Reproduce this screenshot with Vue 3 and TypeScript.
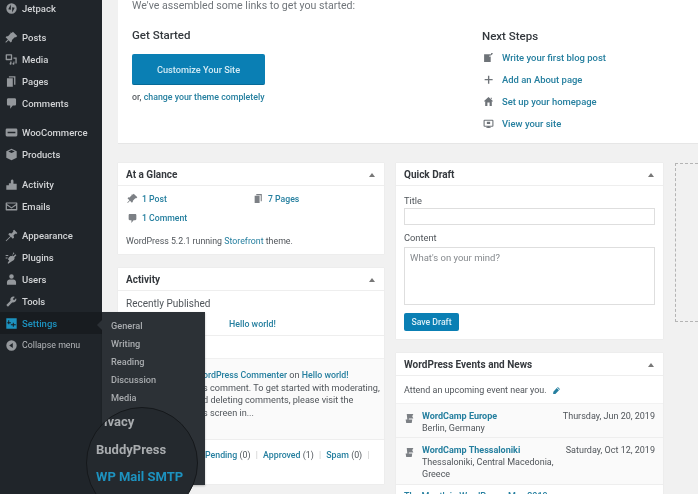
<script setup lang="ts">
const P: Record<string, string> = {
  jetpack: 'M10 2a8 8 0 1 0 0 16 8 8 0 0 0 0-16zM9 4v8L5 11zM11 8l4 1-4 7z',
  pin: 'M10.4 3l1.8-1.8 6.6 6.6-1.8 1.8c-.8-.3-1.8-.1-2.4.5l-3.5 3.5c-.6.6-.7 1.5-.4 2.3l-1.8 1.8-3.5-3.5-3.9 3.9-1-1 3.9-3.9-3.5-3.5 1.8-1.8c.8.3 1.7.2 2.3-.4l3.5-3.5c.6-.6.2-1.2-.1-2z',
  media: 'M2 2h8a1 1 0 0 1 1 1v7a1 1 0 0 1-1 1H2a1 1 0 0 1-1-1V3a1 1 0 0 1 1-1zm1 2v5h6V4zm10 3h5v9h-2v-7h-3zM8 13h2v3.500a1.500 1.500 0 1 1-2-1.400zM13 13h1.500v3.500a1.500 1.500 0 1 1-1.500-1.400z',
  pages: 'M6 2h10v13h-2V4H6zM3 5h9v13H3z',
  comment: 'M5 2h10c1.100 0 2 .9 2 2v7c0 1.100-.9 2-2 2h-3l-4 5v-5H5c-1.100 0-2-.9-2-2V4c0-1.100.9-2 2-2z',
  woo: 'M3 4h14a2 2 0 0 1 2 2v8a2 2 0 0 1-2 2H3a2 2 0 0 1-2-2V6a2 2 0 0 1 2-2zm1 5v2h12V9z',
  box: 'M10 1l8 4v10l-8 4-8-4V5zm0 2L5 5.300l5 2.400 5-2.400z',
  activity: 'M2 18V11h4V8h3V4l2-2 2 2v5h5v9z',
  mail: 'M2 4h16a1 1 0 0 1 1 1v10a1 1 0 0 1-1 1H2a1 1 0 0 1-1-1V5a1 1 0 0 1 1-1zm1 2l7 5 7-5v-.5H3zm0 2.300V14h14V8.300l-7 4.700z',
  brush: 'M14 1l5 5-2 2-1-1-3 3 1 3-2 2-3-3-7 7-1-1 7-7-3-3 2-2 3 1 3-3-1-1z',
  plugin: 'M13 2l1.500 1.500-3 3L13 8l3-3 1.500 1.500-3 3c.8 2-.2 4-2 5l-2.500 1.500L6 19l-1 .5-1-1 2.500-4L4.500 12.500 6 10c1-1.800 3-2.800 5-2zM1 10h3v1.500H1zM1 6h4v1.500H1z',
  users: 'M10 2a3.500 3.500 0 1 1 0 7 3.500 3.500 0 0 1 0-7zM3 18v-4c0-2 2-4 4-4h6c2 0 4 2 4 4v4z',
  wrench: 'M17 5l-3 3-2-2 3-3c-2-1-4-.5-5.500 1S8 7.500 8.500 9L2 15.500 4.500 18 11 11.500c1.500.5 3.500 0 5-1.500s2-3 1-5z',
  settings: 'M2 2h16v16H2zm3 3v3H3.500v1.500H5V11h1.500V9.500H9V8H6.500V5zm7 4v2H9v1.500h3V15h1.500v-2.500H16.500V11h-3V9z',
  collapse: 'M10 2a8 8 0 1 0 0 16 8 8 0 0 0 0-16zm2 4v8L6.500 10z',
  edit: 'M2 4h12v3h-3v1h3v10H2zM15 2l2 0 1 1-3 3-1-1z',
  plus: 'M9 3h2.500v6H17.500v2.500h-6V17.500H9v-6H3V9h6z',
  home: 'M10 2l8 7-1 1.500-1-.8V18h-4v-6H8v6H4V9.700l-1 .8L2 9zM14 3h2v3l-2-1.500z',
  screen: 'M3 3h14a2 2 0 0 1 2 2v9a2 2 0 0 1-2 2h-5v1h2v1H6v-1h2v-1H3a2 2 0 0 1-2-2V5a2 2 0 0 1 2-2zm0 2v9h14V5zm4 2h6v4H7z',
  camp: 'M4 2h13l-2 4 2 4H9l-.5 2H15l-1 6H4l-1-6h3L5 2z',
  pencil: 'M13 2l5 5-1.500 1.500-5-5zM10.500 4.500l5 5-8 8-5 .5.500-5.500z',
}
const menu = [
  [{ label: 'Jetpack', icon: 'jetpack' }],
  [
    { label: 'Posts', icon: 'pin' },
    { label: 'Media', icon: 'media' },
    { label: 'Pages', icon: 'pages' },
    { label: 'Comments', icon: 'comment' },
  ],
  [
    { label: 'WooCommerce', icon: 'woo' },
    { label: 'Products', icon: 'box' },
  ],
  [
    { label: 'Activity', icon: 'activity' },
    { label: 'Emails', icon: 'mail' },
  ],
  [
    { label: 'Appearance', icon: 'brush' },
    { label: 'Plugins', icon: 'plugin' },
    { label: 'Users', icon: 'users' },
    { label: 'Tools', icon: 'wrench' },
    { label: 'Settings', icon: 'settings', current: true },
    { label: 'Collapse menu', icon: 'collapse', dim: true },
  ],
]
const submenu = ['General', 'Writing', 'Reading', 'Discussion', 'Media']
const steps = [
  { label: 'Write your first blog post', icon: 'edit' },
  { label: 'Add an About page', icon: 'plus' },
  { label: 'Set up your homepage', icon: 'home' },
  { label: 'View your site', icon: 'screen' },
]
const events = [
  { name: 'WordCamp Europe', place: 'Berlin, Germany', date: 'Thursday, Jun 20, 2019' },
  { name: 'WordCamp Thessaloniki', place: 'Thessaloniki, Central Macedonia, Greece', date: 'Saturday, Oct 12, 2019' },
]
</script>

<template>
  <div class="page">
    <aside class="sidebar">
      <div v-for="(group, g) in menu" :key="g" class="group">
        <div
          v-for="item in group"
          :key="item.label"
          class="item"
          :class="{ current: item.current, dim: item.dim }"
        >
          <svg class="micon" viewBox="0 0 20 20"><path fill-rule="evenodd" :d="P[item.icon]" /></svg>
          <span>{{ item.label }}</span>
        </div>
      </div>
    </aside>

    <main class="main">
      <section class="welcome">
        <p class="lead">We've assembled some links to get you started:</p>
        <div class="welcome-cols">
          <div class="started">
            <h3>Get Started</h3>
            <div class="big-btn">Customize Your Site</div>
            <p class="or">or, <a>change your theme completely</a></p>
          </div>
          <div class="next">
            <h3>Next Steps</h3>
            <div v-for="s in steps" :key="s.label" class="step">
              <svg class="sicon" viewBox="0 0 20 20"><path fill-rule="evenodd" :d="P[s.icon]" /></svg>
              <a>{{ s.label }}</a>
            </div>
          </div>
        </div>
      </section>

      <div class="columns">
        <div class="col">
          <section class="card glance">
            <header><h2>At a Glance</h2><i class="caret"></i></header>
            <div class="glance-body">
              <div class="stats">
                <div class="stat">
                  <svg class="gicon" viewBox="0 0 20 20"><path :d="P.pin" /></svg><a>1 Post</a>
                </div>
                <div class="stat">
                  <svg class="gicon" viewBox="0 0 20 20"><path :d="P.pages" /></svg><a>7 Pages</a>
                </div>
                <div class="stat">
                  <svg class="gicon" viewBox="0 0 20 20"><path :d="P.comment" /></svg><a>1 Comment</a>
                </div>
              </div>
              <p class="running">WordPress 5.2.1 running <a>Storefront</a> theme.</p>
            </div>
          </section>

          <section class="card activity">
            <header><h2>Activity</h2><i class="caret"></i></header>
            <div class="published">
              <p>Recently Published</p>
              <div class="pub-row"><a>Hello world!</a></div>
            </div>
            <div class="recent-label"></div>
            <div class="comment-box">
              <p><a>ordPress Commenter</a> on <a>Hello world!</a></p>
              <p>s comment. To get started with moderating,</p>
              <p>d deleting comments, please visit the</p>
              <p>s screen in...</p>
            </div>
            <div class="filters">
              <a>Pending</a> (0) <b>|</b> <a>Approved</a> (1) <b>|</b> <a>Spam</a> (0) <b>|</b>
            </div>
          </section>
        </div>

        <div class="col">
          <section class="card draft">
            <header><h2>Quick Draft</h2><i class="caret"></i></header>
            <div class="draft-body">
              <label>Title</label>
              <div class="input"></div>
              <label class="content-label">Content</label>
              <div class="textarea">What's on your mind?</div>
              <div class="save">Save Draft</div>
            </div>
          </section>

          <section class="card news">
            <header><h2>WordPress Events and News</h2><i class="caret"></i></header>
            <div class="attend">
              Attend an upcoming event near you.
              <svg class="pencil" viewBox="0 0 20 20"><path :d="P.pencil" /></svg>
            </div>
            <div v-for="e in events" :key="e.name" class="event">
              <svg class="camp" viewBox="0 0 20 20"><path :d="P.camp" /></svg>
              <div class="event-main">
                <a>{{ e.name }}</a>
                <div>{{ e.place }}</div>
              </div>
              <div class="event-date">{{ e.date }}</div>
            </div>
            <a class="news-link">The Month in WordPress: May 2019</a>
          </section>
        </div>

        <div class="drop"></div>
      </div>
    </main>

    <nav class="flyout">
      <i class="arrow"></i>
      <div v-for="s in submenu" :key="s" class="sub">{{ s }}</div>
    </nav>

    <div class="lens">
      <div class="lens-item privacy">ivacy</div>
      <div class="lens-item">BuddyPress</div>
      <div class="lens-item mail">WP Mail SMTP</div>
    </div>
  </div>
</template>

<style>
html, body { margin: 0; background: #f1f1f1; }
</style>

<style scoped>
.page {
  position: relative;
  display: flex;
  width: 698px;
  height: 494px;
  overflow: hidden;
  background: #f1f1f1;
  font-family: Roboto, "Liberation Sans", sans-serif;
  font-size: 10px;
  color: #50555a;
  filter: blur(0.6px);
}
p, h2, h3 { margin: 0; }
a { color: #257f9f; }

.sidebar {
  flex: 0 0 102px;
  background: #20252a;
  box-sizing: border-box;
}
.group { margin-bottom: 7px; }
.group:first-child { margin-top: -3px; }
.group:nth-child(3) { margin-bottom: 8px; }
.item {
  display: flex;
  align-items: center;
  gap: 4px;
  height: 22px;
  padding-left: 5px;
  font-size: 9.500px;
  font-weight: 500;
  color: #d2d4d6;
  white-space: nowrap;
}
.micon { width: 13px; height: 13px; fill: #94989c; flex: none; }
.item.current { background: #181c20; color: #1d92bf; }
.item.current .micon { fill: #1d92bf; }
.item.dim { font-weight: 400; color: #b4b7ba; font-size: 8.800px; }

.main { flex: 1; min-width: 0; padding-left: 16px; }
.welcome {
  height: 144px;
  box-sizing: border-box;
  background: #fff;
  padding: 0 0 0 14px;
  border-bottom: 1px solid #e6e6e6;
}
.lead { font-size: 10.600px; line-height: 12px; color: #70757a; }
.welcome-cols { display: flex; margin-top: 15px; }
.started { width: 350px; }
h3 { font-size: 11.500px; line-height: 16px; font-weight: 500; color: #33383d; }
.big-btn {
  display: flex;
  align-items: center;
  justify-content: center;
  width: 133px;
  height: 31px;
  margin-top: 11px;
  border-radius: 2px;
  background: #0a7fb4;
  border-bottom: 1px solid #066a97;
  box-sizing: border-box;
  color: #d3ebf5;
  font-size: 9.200px;
  font-weight: 500;
}
.or { margin-top: 6px; font-size: 8.800px; line-height: 13px; color: #5a5f64; font-weight: 500; }
.next h3 { margin-bottom: 2px; margin-top: 1px; }
.step {
  display: flex;
  align-items: center;
  height: 22px;
  font-size: 9.450px;
  font-weight: 500;
  padding-left: 1px;
  gap: 8px;
}
.sicon { width: 11px; height: 11px; fill: #6e7378; flex: none; }

.columns { display: flex; align-items: flex-start; gap: 12px; margin-top: 19px; }
.col { display: flex; flex-direction: column; gap: 14px; }
.col:nth-child(1) { width: 266px; }
.col:nth-child(2) { width: 267px; }
.card {
  background: #fff;
  box-shadow: 0 0 1px #dcdcdc;
  box-sizing: border-box;
  overflow: hidden;
}
.card header {
  display: flex;
  align-items: center;
  justify-content: space-between;
  height: 23px;
  padding: 1px 8px 0;
  border-bottom: 1px solid #eeeeee;
  box-sizing: border-box;
}
h2 { font-size: 10px; font-weight: 700; color: #35393e; }
.caret {
  width: 0;
  height: 0;
  margin-right: 1px;
  border-left: 3px solid transparent;
  border-right: 3px solid transparent;
  border-bottom: 4px solid #777;
}

.glance { height: 91px; }
.glance-body { padding: 0 8px; }
.stats { display: grid; grid-template-columns: 126px 1fr; padding: 3px 0 0 1px; }
.stat { display: flex; align-items: center; height: 19.500px; gap: 4px; font-weight: 500; font-size: 8.700px; }
.gicon { width: 11px; height: 11px; fill: #7c8085; flex: none; }
.running { margin-top: 7px; font-size: 8.800px; line-height: 12px; color: #50555a; }

.activity { height: 216px; }
.published { padding: 7px 8px 0; height: 45px; box-sizing: border-box; border-bottom: 1px solid #eee; font-size: 10px; line-height: 12px; }
.pub-row { display: flex; margin-top: 8px; padding-left: 103px; font-size: 8.800px; font-weight: 500; }
.recent-label { height: 22px; }
.comment-box {
  height: 81px;
  padding: 10px 0 0 85px;
  box-sizing: border-box;
  background: #fafafa;
  border-top: 1px solid #f0f0f0;
  font-size: 9.150px;
  line-height: 12.700px;
  white-space: nowrap;
}
.comment-box a { font-weight: 500; font-size: 8.800px; }
.filters { padding: 9px 0 0 87px; font-size: 8.800px; line-height: 12px; white-space: nowrap; border-top: 1px solid #eee; }
.filters a { font-weight: 500; }
.filters b { font-weight: 400; color: #ccc; margin: 0 3px; }

.draft { height: 176px; }
.draft-body { padding: 9px 8px 0; }
.draft-body label { display: block; font-size: 9.300px; line-height: 12px; }
.input {
  height: 17px;
  margin-top: 1px;
  box-sizing: border-box;
  border: 1px solid #dedede;
  background: #fff;
}
.draft-body .content-label { margin-top: 7px; }
.textarea {
  height: 58px;
  margin-top: 3px;
  padding: 4px 5px;
  box-sizing: border-box;
  border: 1px solid #dedede;
  color: #85898d;
  font-size: 9.500px;
  line-height: 12px;
}
.save {
  display: flex;
  align-items: center;
  justify-content: center;
  width: 55px;
  height: 18px;
  margin-top: 8px;
  border-radius: 2px;
  background: #0a7fb4;
  color: #dbeff7;
  font-size: 8.700px;
  font-weight: 500;
}

.news { height: 160px; }
.attend {
  display: flex;
  align-items: center;
  gap: 4px;
  height: 28px;
  padding: 1px 8px 0;
  box-sizing: border-box;
  font-size: 8.950px;
  border-bottom: 1px solid #f2f2f2;
}
.pencil { width: 9px; height: 9px; fill: #257f9f; margin-left: 1px; }
.event {
  display: flex;
  align-items: flex-start;
  padding: 7px 8px 3px;
  background: #fafafa;
  border-bottom: 1px solid #eee;
  font-size: 9px;
  line-height: 11.700px;
}
.camp { width: 11px; height: 11px; fill: #7c8085; flex: none; margin: 2px 7px 0 0; }
.event-main { flex: 1; padding-right: 8px; }
.event-main a { font-weight: 700; }
.event-date { white-space: nowrap; font-size: 9px; }
.news-link { display: block; padding: 5px 8px 0; font-size: 9px; font-weight: 500; line-height: 12px; }

.drop {
  flex: 1;
  height: 159px;
  border: 1px dashed #b4b4b4;
  border-right: none;
  box-sizing: border-box;
}

.flyout {
  position: absolute;
  left: 102px;
  top: 312px;
  width: 103px;
  height: 173px;
  padding-top: 5px;
  box-sizing: border-box;
  background: #2c3136;
  box-shadow: 0 1px 2px rgba(0, 0, 0, 0.25);
}
.arrow {
  position: absolute;
  left: -5px;
  top: 8px;
  width: 0;
  height: 0;
  border-top: 5px solid transparent;
  border-bottom: 5px solid transparent;
  border-right: 5px solid #2c3136;
}
.sub {
  height: 18px;
  line-height: 18px;
  padding-left: 9px;
  font-size: 9.200px;
  font-weight: 500;
  color: #a9acaf;
}

.lens {
  position: absolute;
  left: 86px;
  top: 407px;
  width: 112px;
  height: 112px;
  border-radius: 50%;
  box-sizing: border-box;
  border: 1px solid #15181b;
  background: #24292e;
  overflow: hidden;
}
.lens-item {
  height: 27.500px;
  line-height: 27.500px;
  padding-left: 9px;
  font-size: 13px;
  font-weight: 700;
  color: #a9acaf;
  white-space: nowrap;
}
.lens-item.privacy { padding-left: 17px; }
.lens-item.mail { color: #1d92bf; }
</style>
